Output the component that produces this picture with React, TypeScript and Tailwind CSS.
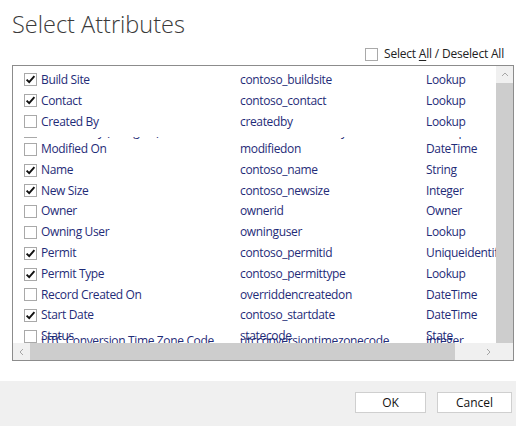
import React from 'react';

type Attr = {
  label: string;
  name: string;
  type: string;
  checked: boolean;
};

const FIRST: Attr[] = [
  { label: 'Build Site', name: 'contoso_buildsite', type: 'Lookup', checked: true },
  { label: 'Contact', name: 'contoso_contact', type: 'Lookup', checked: true },
  { label: 'Created By', name: 'createdby', type: 'Lookup', checked: false },
];

const REST: Attr[] = [
  { label: 'Modified On', name: 'modifiedon', type: 'DateTime', checked: false },
  { label: 'Name', name: 'contoso_name', type: 'String', checked: true },
  { label: 'New Size', name: 'contoso_newsize', type: 'Integer', checked: true },
  { label: 'Owner', name: 'ownerid', type: 'Owner', checked: false },
  { label: 'Owning User', name: 'owninguser', type: 'Lookup', checked: false },
  { label: 'Permit', name: 'contoso_permitid', type: 'Uniqueidentifier', checked: true },
  { label: 'Permit Type', name: 'contoso_permittype', type: 'Lookup', checked: true },
  { label: 'Record Created On', name: 'overriddencreatedon', type: 'DateTime', checked: false },
  { label: 'Start Date', name: 'contoso_startdate', type: 'DateTime', checked: true },
  { label: 'Status', name: 'statecode', type: 'State', checked: false },
];

function CheckBox({ checked, hidden }: { checked: boolean; hidden?: boolean }) {
  return (
    <span
      className={`flex h-[13px] w-[13px] shrink-0 items-center justify-center ${
        hidden ? 'border border-transparent' : 'border border-[#a9a9a9] bg-white'
      }`}
    >
      {checked && (
        <svg width="11" height="11" viewBox="0 0 11 11">
          <path d="M1.6 5.6 L4.2 8.2 L9.4 2.2" fill="none" stroke="#111" strokeWidth="1.9" />
        </svg>
      )}
    </span>
  );
}

function Row({ attr, hideBox, tight }: { attr: Attr; hideBox?: boolean; tight?: boolean }) {
  return (
    <div
      className={`flex shrink-0 items-center whitespace-nowrap pl-[11px] text-[12px] tracking-[-0.35px] text-[#1f2c78] ${
        tight ? 'h-[20.8px] leading-[20.8px]' : 'h-[21px] leading-[21px]'
      }`}
    >
      <CheckBox checked={attr.checked} hidden={hideBox} />
      <span className="w-[203px] shrink-0 pl-[4px]">{attr.label}</span>
      <span className="w-[186px] shrink-0">{attr.name}</span>
      <span className="shrink-0">{attr.type}</span>
    </div>
  );
}

function Chevron({ dir }: { dir: 'up' | 'left' | 'right' }) {
  const d =
    dir === 'up' ? 'M2 6 L5 3 L8 6' : dir === 'left' ? 'M6 2 L3 5 L6 8' : 'M4 2 L7 5 L4 8';
  return (
    <svg width="10" height="10" viewBox="0 0 10 10">
      <path d={d} fill="none" stroke="#a6a6a6" strokeWidth="1" />
    </svg>
  );
}

export default function App() {
  return (
    <main className="flex h-[426px] w-[516px] flex-col bg-white font-['Open_Sans','Noto_Sans',sans-serif]">
      {/* Title */}
      <div className="h-[42px] pl-[12px] pt-[10px]">
        <h1 className="text-[23.5px] font-light leading-[28px] text-[#3a3a3a]">Select Attributes</h1>
      </div>

      {/* Select all */}
      <div className="flex h-[23px] items-start justify-end pr-[12px] pt-[4px]">
        <label className="flex items-center gap-[6px] text-[12px] leading-[16px] tracking-[-0.2px] text-[#222]">
          <CheckBox checked={false} />
          <span>
            Select <span className="underline underline-offset-2">A</span>ll / Deselect All
          </span>
        </label>
      </div>

      {/* List box */}
      <div className="ml-[12px] flex h-[296px] w-[502px] flex-col border border-[#8c8c8c]">
        <div className="flex min-h-0 flex-1">
          <div className="flex min-w-0 flex-1 flex-col overflow-hidden pt-[3px]">
            {FIRST.map((a) => (
              <Row key={a.name} attr={a} />
            ))}
            {/* half drawn row */}
            <div className="mt-[5px] h-[7px] shrink-0 overflow-hidden">
              <div className="-mt-[16px]">
                <Row
                  attr={{
                    label: 'Modified By (Delegate)',
                    name: 'modifiedonbehalfby',
                    type: 'Lookup',
                    checked: false,
                  }}
                />
              </div>
            </div>
            <div className="-mt-[5px] flex flex-col">
              {REST.map((a) => (
                <Row key={a.name} attr={a} tight />
              ))}
              <div className="-mt-[16px]">
                <Row
                  hideBox
                  tight
                  attr={{
                    label: 'UTC Conversion Time Zone Code',
                    name: 'utcconversiontimezonecode',
                    type: 'Integer',
                    checked: false,
                  }}
                />
              </div>
            </div>
          </div>
          {/* vertical scrollbar */}
          <div className="flex w-[17px] shrink-0 flex-col bg-[#f0f0f0]">
            <div className="flex h-[17px] items-center justify-center">
              <Chevron dir="up" />
            </div>
            <div className="flex-1 bg-[#cdcdcd]" />
          </div>
        </div>
        {/* horizontal scrollbar */}
        <div className="flex h-[17px] shrink-0 bg-[#f0f0f0]">
          <div className="flex w-[17px] items-center justify-center">
            <Chevron dir="left" />
          </div>
          <div className="w-[425px] bg-[#cdcdcd]" />
          <div className="flex-1" />
          <div className="flex w-[17px] items-center justify-center">
            <Chevron dir="right" />
          </div>
          <div className="w-[17px]" />
        </div>
      </div>

      {/* Footer */}
      <div className="mt-auto flex h-[45px] items-start justify-end gap-[11px] bg-[#f0f0f0] pr-[4px] pt-[11px]">
        <button className="h-[21px] w-[71px] border border-[#cfcfcf] bg-white text-[12px] leading-[19px] text-[#111]">
          OK
        </button>
        <button className="h-[21px] w-[75px] border border-[#cfcfcf] bg-white text-[12px] leading-[19px] text-[#111]">
          Cancel
        </button>
      </div>
    </main>
  );
}
